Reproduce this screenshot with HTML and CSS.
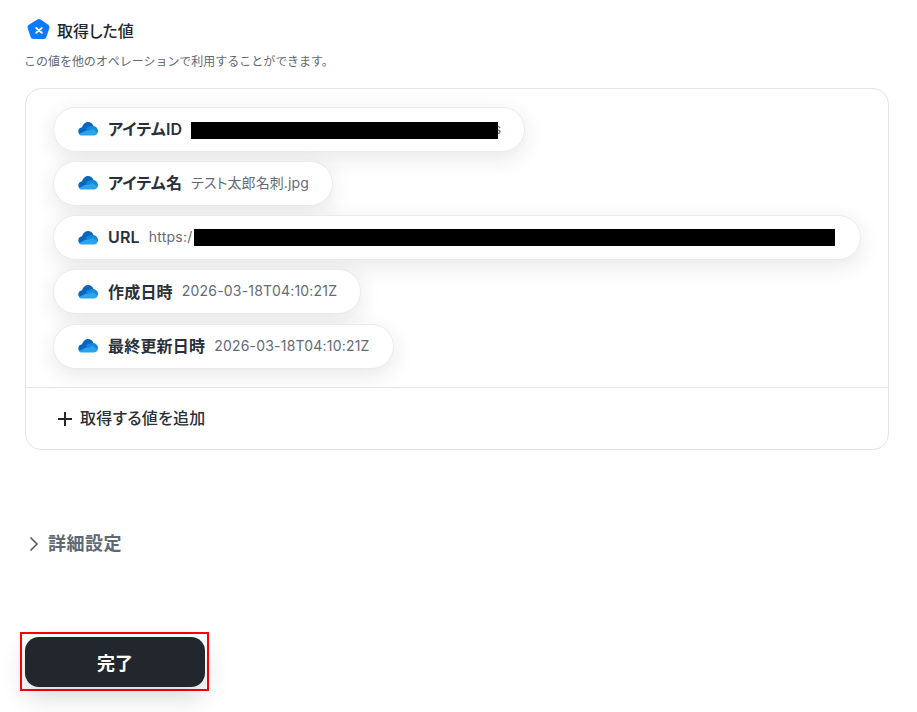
FILE: index.html
```html
<!DOCTYPE html>
<html lang="ja">
<head>
    <meta charset="UTF-8" />
    <title>取得した値</title>
    <link rel="stylesheet" href="styles.css">
</head>
<body>
    <svg width="0" height="0" class="defs">
        <symbol id="cloud" viewBox="0 0 20 14">
            <path fill="#0a66bd" d="M.3 9.500C.3 7 2 5.500 4 5.200 5 2 7.500 0 10 0c2.500 0 4.500 1.500 5.500 4v3L3 12.500C1 12.500.3 11 .3 9.500Z"/>
            <path fill="#1488dc" d="M8 6.500C10 4.800 12.500 3.700 15.500 4 18 4.300 20 6.500 20 9c0 .8-.2 1.500-.5 2H10Z"/>
            <path fill="#2aa4ec" d="M1 12 8 8.500c2 1 4-.5 7-1.500l4.600 3.800C19 12.500 17.800 13.500 16 13.500H3.500C2.300 13.500 1.500 12.900 1 12Z"/>
        </symbol>
    </svg>

    <main class="page">
        <h2 class="section-title">
            <svg class="badge" width="24" height="24" viewBox="0 0 24 24">
                <path fill="#0a7bff" d="M10.300 1.500a3 3 0 0 1 3.400 0l7.500 5.300a3 3 0 0 1 1.100 3.400l-2.900 8.800a3 3 0 0 1-2.800 2H6.400a3 3 0 0 1-2.800-2L.7 10.200a3 3 0 0 1 1.100-3.400Z"/>
                <path fill="none" stroke="#fff" stroke-width="1.800" stroke-linecap="round" d="M9.200 10l5.600 4.800M14.800 10l-5.600 4.800"/>
            </svg>
            取得した値
        </h2>
        <p class="section-note">この値を他のオペレーションで利用することができます。</p>

        <section class="card">
            <ul class="pills">
                <li class="pill">
                    <svg class="cloud" width="20" height="14"><use href="#cloud"/></svg>
                    <span class="pill-name">アイテムID</span>
                    <span class="pill-value masked">01ABCDEFGHIJKLMNOPQRSTUVWXYZ2345s</span>
                </li>
                <li class="pill">
                    <svg class="cloud" width="20" height="14"><use href="#cloud"/></svg>
                    <span class="pill-name">アイテム名</span>
                    <span class="pill-value pill-value-ja">テスト太郎名刺.jpg</span>
                </li>
                <li class="pill pill-url">
                    <svg class="cloud" width="20" height="14"><use href="#cloud"/></svg>
                    <span class="pill-name">URL</span>
                    <span class="pill-value">https:/</span>
                    <span class="redact"></span>
                </li>
                <li class="pill">
                    <svg class="cloud" width="20" height="14"><use href="#cloud"/></svg>
                    <span class="pill-name">作成日時</span>
                    <span class="pill-value">2026-03-18T04:10:21Z</span>
                </li>
                <li class="pill">
                    <svg class="cloud" width="20" height="14"><use href="#cloud"/></svg>
                    <span class="pill-name">最終更新日時</span>
                    <span class="pill-value">2026-03-18T04:10:21Z</span>
                </li>
            </ul>
            <div class="card-footer">
                <svg width="14" height="14" viewBox="0 0 14 14">
                    <path fill="none" stroke="#22272e" stroke-width="2" d="M7 0v14M0 7h14"/>
                </svg>
                <span class="footer-label">取得する値を追加</span>
            </div>
        </section>

        <div class="advanced">
            <svg class="chevron" width="10" height="16" viewBox="0 0 10 16">
                <path fill="none" stroke="#4b5563" stroke-width="1.500" d="M1.500 1.500 8 8l-6.500 6.500"/>
            </svg>
            <span>詳細設定</span>
        </div>

        <div class="done-frame">
            <button class="done">完了</button>
        </div>
    </main>
</body>
</html>
```

FILE: styles.css
```css
body {
    margin: 0;
    background: #fff;
    color: #22272e;
    font-family: Inter, "Noto Sans CJK JP", sans-serif;
    font-feature-settings: "palt";
    overflow: hidden;
}

.defs {
    position: absolute;
}

.page {
    height: 712px;
    box-sizing: border-box;
    padding: 18px 28px 0 25px;
}

.section-title {
    display: flex;
    align-items: center;
    gap: 6px;
    margin: 0 0 0 2px;
    height: 24px;
    font-size: 16px;
    font-weight: 500;
    color: #22272e;
}

.section-note {
    margin: 10px 0 0 -1px;
    height: 20px;
    line-height: 20px;
    font-size: 12px;
    font-feature-settings: normal;
    letter-spacing: -0.03px;
    color: #5f6875;
}

.card {
    margin-top: 16px;
    height: 362px;
    box-sizing: border-box;
    border: 1px solid #e3e5e8;
    border-radius: 16px;
    display: flex;
    flex-direction: column;
}

/* value pills */
.pills {
    list-style: none;
    margin: 0;
    padding: 17.800px 0 0 27px;
    display: flex;
    flex-direction: column;
    align-items: flex-start;
    gap: 9.200px;
    height: 298px;
    box-sizing: border-box;
}

.pill {
    display: flex;
    align-items: center;
    height: 45px;
    box-sizing: border-box;
    padding: 0 23px 0 24px;
    border: 1px solid #e9ebee;
    border-radius: 23px;
    background: #fff;
    box-shadow: 0 6px 22px rgba(34, 39, 46, 0.11);
    white-space: nowrap;
}

.cloud {
    flex: none;
    margin-right: 10px;
}

.pill-name {
    padding-bottom: 2px;
    font-size: 16px;
    font-weight: 600;
    letter-spacing: 0.2px;
    color: #2b3038;
}

.pill-value {
    margin-left: 9px;
    padding-bottom: 2px;
    font-size: 14px;
    color: #636b77;
    letter-spacing: 0.2px;
}

.pill-value-ja {
    letter-spacing: 0.1px;
}

.masked {
    position: relative;
    display: block;
    width: 310px;
    height: 20px;
    padding-bottom: 0;
    line-height: 20px;
    overflow: hidden;
    direction: rtl;
}

.masked::after {
    content: "";
    position: absolute;
    left: 0;
    top: 2.500px;
    width: 307px;
    height: 17px;
    background: #000;
}

.pill-url {
    width: 808px;
}

.redact {
    display: block;
    width: 641px;
    height: 17px;
    margin-left: 2px;
    background: #000;
}

.card-footer {
    flex: 1;
    display: flex;
    align-items: center;
    gap: 8px;
    padding-left: 32px;
    border-top: 1px solid #e3e5e8;
    font-size: 16px;
    font-weight: 500;
    color: #2b3038;
}

.footer-label {
    padding-bottom: 3px;
    letter-spacing: 0.25px;
}

.advanced {
    display: flex;
    align-items: center;
    gap: 9px;
    margin: 80px 0 0 4px;
    height: 24px;
    font-size: 18px;
    font-weight: 600;
    letter-spacing: 0.5px;
    color: #5f6875;
}

.chevron {
    margin-top: 3px;
}

.done-frame {
    width: 189px;
    height: 59px;
    box-sizing: border-box;
    margin: 78px 0 0 -5px;
    padding: 3px 0 0 3px;
    border: 2px solid #f00;
}

.done {
    display: block;
    width: 180px;
    height: 50px;
    border: 0;
    border-radius: 14px;
    background: #22272e;
    color: #fff;
    font: 700 18px Inter, "Noto Sans CJK JP", sans-serif;
    box-shadow: 0 10px 24px rgba(34, 39, 46, 0.18);
}
```
